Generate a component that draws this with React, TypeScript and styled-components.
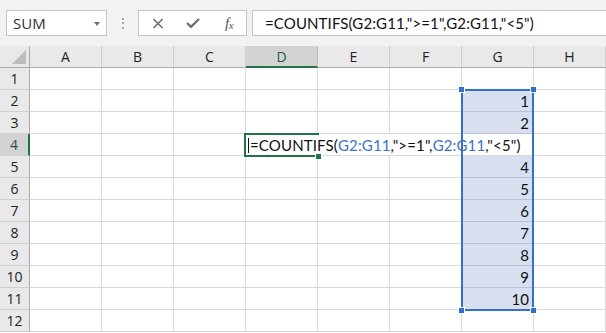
import React from 'react';
import styled, { createGlobalStyle } from 'styled-components';

const Global = createGlobalStyle`
  html, body { margin: 0; padding: 0; background: #fff; }
  body { width: 606px; height: 333px; overflow: hidden; font-family: "Open Sans", "Noto Sans", sans-serif; }
`;

const Page = styled.div`
  width: 606px;
  height: 333px;
  display: flex;
  flex-direction: column;
  background: #fff;
  overflow: hidden;
`;

const TopBar = styled.div`
  height: 46px;
  flex: none;
  box-sizing: border-box;
  background: #f2f2f2;
  display: flex;
  align-items: flex-start;
  padding: 10px 0 0 6px;
`;

const NameBox = styled.div`
  width: 101px;
  height: 26px;
  box-sizing: border-box;
  background: #fff;
  border: 1px solid #c6c6c6;
  display: flex;
  align-items: center;
  justify-content: space-between;
  padding: 0 6px 0 6px;
  font-size: 15px;
  color: #333;
`;

const DropArrow = styled.span`
  width: 0;
  height: 0;
  border-left: 3.5px solid transparent;
  border-right: 3.5px solid transparent;
  border-top: 4px solid #707070;
  margin-top: 1px;
`;

const Grip = styled.div`
  width: 31px;
  height: 26px;
  display: flex;
  flex-direction: column;
  align-items: center;
  justify-content: center;
  gap: 2.5px;
`;

const GripDot = styled.span`
  width: 2px;
  height: 2px;
  background: #a6a6a6;
`;

const FxBox = styled.div`
  width: 109px;
  height: 26px;
  box-sizing: border-box;
  background: #fff;
  border: 1px solid #c6c6c6;
  display: flex;
  align-items: center;
  padding-left: 12px;
`;

const IconSlot = styled.span<{ $w: number }>`
  width: ${(p) => p.$w}px;
  height: 24px;
  display: flex;
  align-items: center;
  justify-content: center;
  flex: none;
`;

const FxText = styled.span`
  font-family: "Liberation Serif", "DejaVu Serif", serif;
  font-style: italic;
  font-size: 15px;
  color: #555;
  letter-spacing: -0.5px;
  & > sub {
    font-size: 11px;
    vertical-align: -1px;
  }
`;

const FormulaInput = styled.div`
  flex: 1;
  height: 26px;
  margin-left: 5px;
  box-sizing: border-box;
  background: #fff;
  border: 1px solid #c6c6c6;
  border-right: none;
  display: flex;
  align-items: center;
  padding-left: 12px;
  font-family: "Lato", "Open Sans", sans-serif;
  font-size: 15px;
  letter-spacing: 0.12px;
  color: #111;
  white-space: pre;
`;

const Grid = styled.div`
  position: relative;
  display: grid;
  grid-template-columns: 30px repeat(8, 72px);
  grid-auto-rows: 22px;
`;

const Corner = styled.div`
  background: #e9e9e9;
  border-right: 1px solid #ababab;
  border-bottom: 1px solid #ababab;
  box-sizing: border-box;
  display: flex;
  align-items: flex-end;
  justify-content: flex-end;
  padding: 0 3px 3px 0;
`;

const CornerTriangle = styled.span`
  width: 0;
  height: 0;
  border-left: 14px solid transparent;
  border-bottom: 14px solid #bdbdbd;
`;

const ColHeader = styled.div<{ $active?: boolean }>`
  box-sizing: border-box;
  background: ${(p) => (p.$active ? '#d3d3d3' : '#e9e9e9')};
  border-right: 1px solid ${(p) => (p.$active ? '#c0c0c0' : '#cfcfcf')};
  border-bottom: ${(p) => (p.$active ? '2px solid #217346' : '1px solid #ababab')};
  display: flex;
  align-items: center;
  justify-content: center;
  font-size: 14px;
  color: ${(p) => (p.$active ? '#1b5e3b' : '#222')};
  padding-top: ${(p) => (p.$active ? '1px' : '0')};
`;

const RowHeader = styled.div<{ $active?: boolean }>`
  box-sizing: border-box;
  background: ${(p) => (p.$active ? '#d3d3d3' : '#e9e9e9')};
  border-right: ${(p) => (p.$active ? '2px solid #217346' : '1px solid #ababab')};
  border-bottom: 1px solid #cfcfcf;
  display: flex;
  align-items: center;
  justify-content: center;
  font-size: 14px;
  color: ${(p) => (p.$active ? '#2d4f3d' : '#222')};
`;

const Cell = styled.div<{ $selected?: boolean; $right?: boolean }>`
  box-sizing: border-box;
  background: ${(p) => (p.$selected ? '#d7dff0' : '#fff')};
  border-right: 1px solid #d9d9d9;
  border-bottom: 1px solid ${(p) => (p.$selected ? '#b9c2d5' : '#d9d9d9')};
  display: flex;
  align-items: center;
  justify-content: ${(p) => (p.$right ? 'flex-end' : 'flex-start')};
  padding: 1px 4px 0 3px;
  font-family: "Lato", "Open Sans", sans-serif;
  font-size: 15px;
  color: #111;
`;

const EditorCell = styled.div`
  grid-column: span 4;
  box-sizing: border-box;
  background: #fff;
  border-right: 1px solid #d9d9d9;
  border-bottom: 1px solid #d9d9d9;
  display: flex;
  align-items: center;
  padding: 1px 0 0 2px;
  font-family: "Lato", "Open Sans", sans-serif;
  font-size: 15px;
  letter-spacing: 0.15px;
  color: #111;
  white-space: pre;
`;

const Caret = styled.span`
  width: 1px;
  height: 15px;
  background: #111;
  margin-right: 1px;
`;

const Ref = styled.span`
  color: #3a72c9;
`;

const Selection = styled.div`
  position: absolute;
  left: 461px;
  top: 43px;
  width: 73px;
  height: 222px;
  box-sizing: border-box;
  border: 2px solid #3470c9;
  pointer-events: none;
`;

const Handle = styled.span<{ $x: 'left' | 'right'; $y: 'top' | 'bottom' }>`
  position: absolute;
  ${(p) => p.$x}: -5px;
  ${(p) => p.$y}: -5px;
  width: 5px;
  height: 5px;
  background: #3470c9;
  border: 1px solid #fff;
`;

const ActiveCell = styled.div`
  position: absolute;
  left: 244px;
  top: 87px;
  width: 75px;
  height: 24px;
  box-sizing: border-box;
  border: 2px solid #217346;
  border-right: none;
  pointer-events: none;
`;

const FillHandle = styled.span`
  position: absolute;
  right: -3px;
  bottom: -4px;
  width: 5px;
  height: 5px;
  background: #217346;
  border: 1px solid #fff;
  border-bottom: none;
`;

const COLS = ['A', 'B', 'C', 'D', 'E', 'F', 'G', 'H'];
const ROWS = Array.from({ length: 12 }, (_, i) => i + 1);
const G_VALUES: Record<number, string> = {
  2: '1', 3: '2', 5: '4', 6: '5', 7: '6', 8: '7', 9: '8', 10: '9', 11: '10',
};

const CrossIcon = () => (
  <svg width="12" height="11" viewBox="0 0 12 11">
    <path d="M1.5 1 L10.5 10 M10.5 1 L1.5 10" stroke="#6f6f6f" strokeWidth="1.6" fill="none" />
  </svg>
);

const CheckIcon = () => (
  <svg width="14" height="10" viewBox="0 0 14 10">
    <path d="M1 5 L5 8.8 L13 1" stroke="#6f6f6f" strokeWidth="2.4" fill="none" />
  </svg>
);

const FORMULA = '=COUNTIFS(G2:G11,">=1",G2:G11,"<5")';

export default function App() {
  return (
    <Page>
      <Global />
      <TopBar>
        <NameBox>
          SUM
          <DropArrow />
        </NameBox>
        <Grip>
          <GripDot />
          <GripDot />
          <GripDot />
        </Grip>
        <FxBox>
          <IconSlot $w={14}><CrossIcon /></IconSlot>
          <IconSlot $w={20} />
          <IconSlot $w={16}><CheckIcon /></IconSlot>
          <IconSlot $w={22} />
          <IconSlot $w={12}>
            <FxText>f<sub>x</sub></FxText>
          </IconSlot>
        </FxBox>
        <FormulaInput>{FORMULA}</FormulaInput>
      </TopBar>
      <Grid>
        <Corner>
          <CornerTriangle />
        </Corner>
        {COLS.map((c) => (
          <ColHeader key={c} $active={c === 'D'}>
            {c}
          </ColHeader>
        ))}
        {ROWS.map((r) => (
          <React.Fragment key={r}>
            <RowHeader $active={r === 4}>{r}</RowHeader>
            {r === 4 ? (
              <>
                <Cell />
                <Cell />
                <Cell />
                <EditorCell>
                  <Caret />
                  {'=COUNTIFS('}
                  <Ref>G2:G11</Ref>
                  {',">=1",'}
                  <Ref>G2:G11</Ref>
                  {',"<5")'}
                </EditorCell>
                <Cell />
              </>
            ) : (
              COLS.map((c) => {
                const isG = c === 'G';
                return (
                  <Cell key={c} $selected={isG && r >= 2 && r <= 11} $right={isG}>
                    {isG ? G_VALUES[r] ?? '' : ''}
                  </Cell>
                );
              })
            )}
          </React.Fragment>
        ))}
        <Selection>
          <Handle $x="left" $y="top" />
          <Handle $x="right" $y="top" />
          <Handle $x="left" $y="bottom" />
          <Handle $x="right" $y="bottom" />
        </Selection>
        <ActiveCell>
          <FillHandle />
        </ActiveCell>
      </Grid>
    </Page>
  );
}
